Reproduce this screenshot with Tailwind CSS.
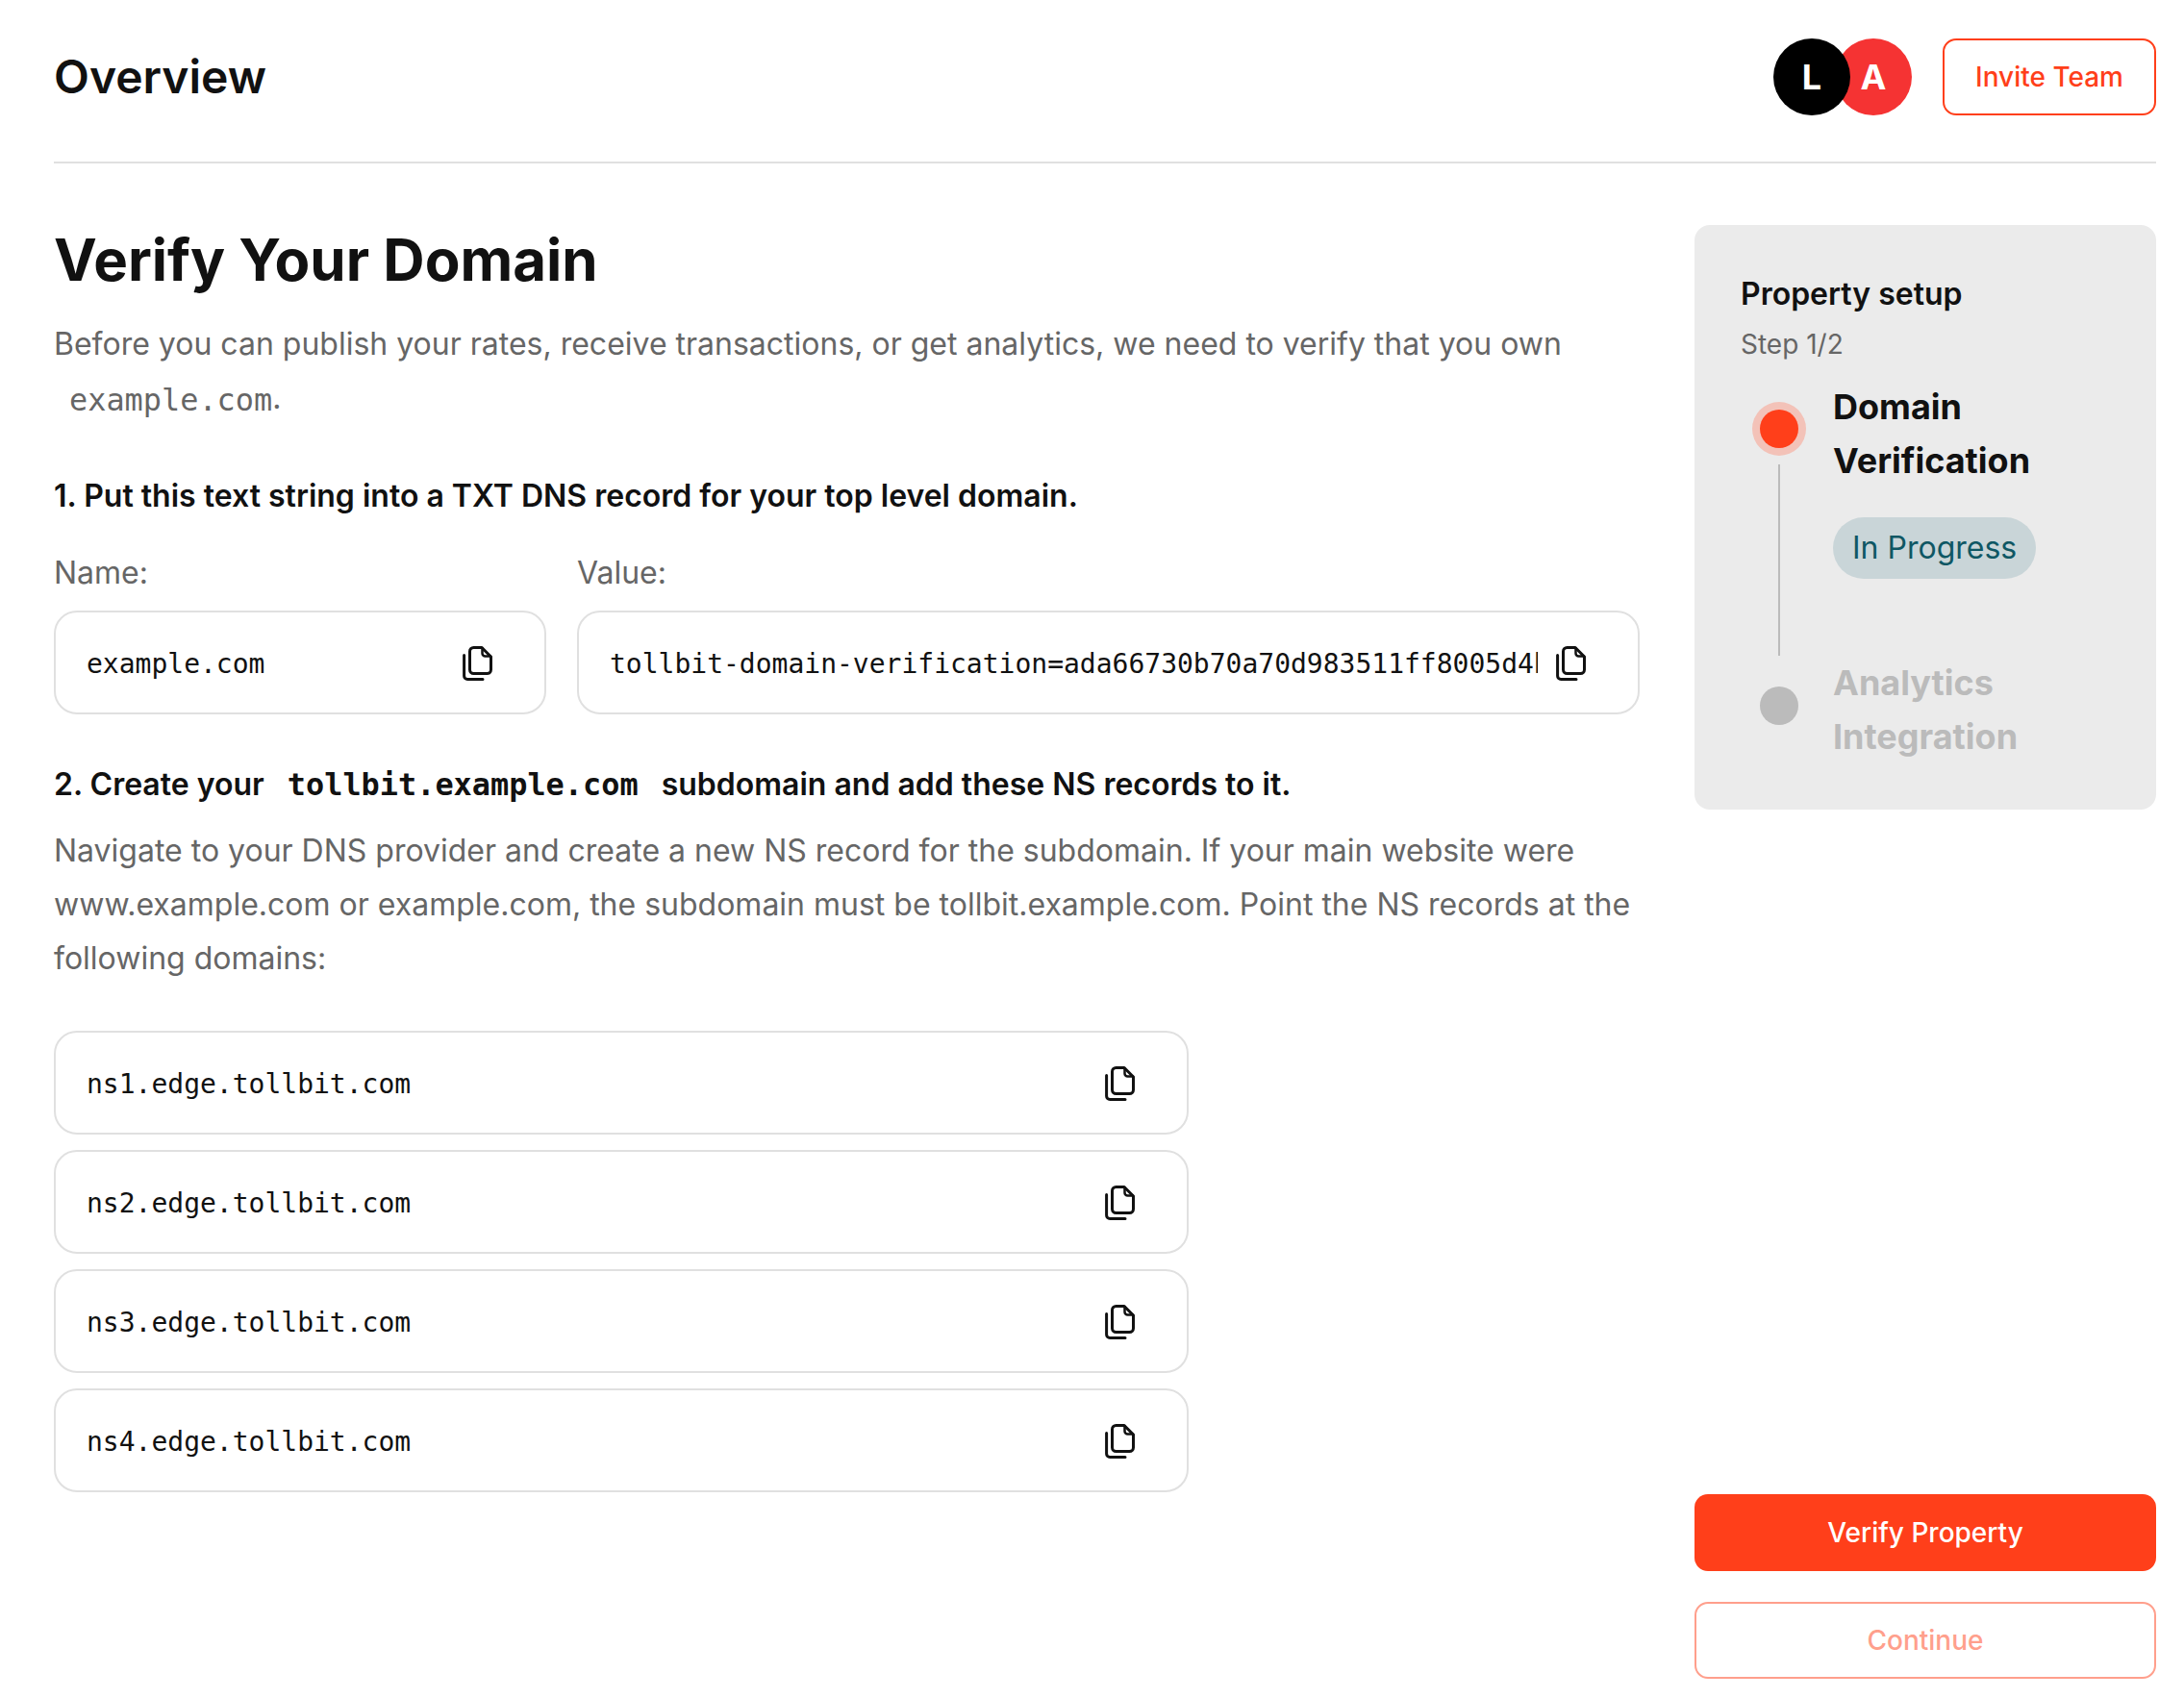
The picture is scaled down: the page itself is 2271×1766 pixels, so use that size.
<!DOCTYPE html>
<html lang="en">

<head>
  <meta charset="UTF-8" />
  <title>Overview</title>
  <script src="https://cdn.jsdelivr.net/npm/@tailwindcss/browser@4"></script>
</head>

<body class="bg-white font-['Inter',sans-serif] text-[#111111]">
  <div class="h-[1766px] pl-[56px] pr-[29px] pb-[20px] flex flex-col">

    <!-- header -->
    <header class="h-[170px] shrink-0 pt-[40px] border-b-2 border-[#e0e0e0] flex justify-between items-start">
      <h2 class="text-[48px] leading-[80px] font-semibold">Overview</h2>
      <div class="flex items-center gap-[32px]">
        <div class="flex">
          <div class="relative z-10 w-[80px] h-[80px] rounded-full bg-black text-white flex items-center justify-center text-[36px] font-bold">L</div>
          <div class="-ml-[16px] w-[80px] h-[80px] rounded-full bg-[#f53333] text-white flex items-center justify-center text-[36px] font-bold">A</div>
        </div>
        <button class="w-[222px] h-[80px] rounded-[14px] border-2 border-[#ff3f1a] text-[#ff3f1a] text-[28px] font-medium">Invite Team</button>
      </div>
    </header>

    <div class="flex-1 flex justify-between pt-[64px]">
      <!-- left column -->
      <main class="w-[1649px]">
        <h1 class="text-[60px] leading-[72px] font-bold">Verify Your Domain</h1>
        <p class="mt-[24px] text-[32px] leading-[56px] text-[#666666]">Before you can publish your rates, receive transactions, or get analytics, we need to verify that you own <code class="pl-4 leading-none align-[-2px] font-['DejaVu_Sans_Mono',monospace] text-[31.9px]">example.com</code>.</p>

        <h3 class="mt-[54px] text-[32px] leading-[40px] font-semibold">1. Put this text string into a TXT DNS record for your top level domain.</h3>

        <div class="mt-[40px] flex gap-[32px]">
          <div class="w-[512px]">
            <div class="text-[32px] leading-[40px] text-[#666666] mb-[19px]">Name:</div>
            <div class="h-[108px] rounded-[24px] border-2 border-[#e0e0e0] flex items-center pl-[32px] pr-[53px]">
              <div class="flex-1 overflow-hidden whitespace-nowrap font-['DejaVu_Sans_Mono',monospace] text-[28px] pt-[3px] mr-[19px]">example.com</div>
              <svg class="w-[32px] h-[37px] shrink-0" viewBox="0 0 32 37" fill="none" stroke="#111111" stroke-width="3" stroke-linecap="round" stroke-linejoin="round"><path d="M11.5 2.5H20L29.5 12V25.5a4 4 0 0 1-4 4H11.5a4 4 0 0 1-4-4V6.5a4 4 0 0 1 4-4Z"/><path d="M20.5 3V8.5a3 3 0 0 0 3 3H29" stroke-width="2.5"/><path d="M1.6 10.5V32a3.5 3.5 0 0 0 3.5 3.5H21"/></svg>
            </div>
          </div>
          <div class="flex-1 min-w-0">
            <div class="text-[32px] leading-[40px] text-[#666666] mb-[19px]">Value:</div>
            <div class="h-[108px] rounded-[24px] border-2 border-[#e0e0e0] flex items-center pl-[32px] pr-[53px]">
              <div class="flex-1 overflow-hidden whitespace-nowrap font-['DejaVu_Sans_Mono',monospace] text-[28px] pt-[3px] mr-[19px]">tollbit-domain-verification=ada66730b70a70d983511ff8005d4bc2</div>
              <svg class="w-[32px] h-[37px] shrink-0" viewBox="0 0 32 37" fill="none" stroke="#111111" stroke-width="3" stroke-linecap="round" stroke-linejoin="round"><path d="M11.5 2.5H20L29.5 12V25.5a4 4 0 0 1-4 4H11.5a4 4 0 0 1-4-4V6.5a4 4 0 0 1 4-4Z"/><path d="M20.5 3V8.5a3 3 0 0 0 3 3H29" stroke-width="2.5"/><path d="M1.6 10.5V32a3.5 3.5 0 0 0 3.5 3.5H21"/></svg>
            </div>
          </div>
        </div>

        <h3 class="mt-[45px] text-[32px] leading-[56px] font-semibold">2. Create your <code class="px-4 leading-none font-['DejaVu_Sans_Mono',monospace] font-bold text-[31.9px]">tollbit.example.com</code> subdomain and add these NS records to it.</h3>
        <p class="mt-[13px] text-[32px] leading-[56px] text-[#666666]">Navigate to your DNS provider and create a new NS record for the subdomain. If your main website were www.example.com or example.com, the subdomain must be tollbit.example.com. Point the NS records at the following domains:</p>

        <div class="mt-[47px] w-[1180px] flex flex-col gap-[16px]">
          <div class="h-[108px] rounded-[24px] border-2 border-[#e0e0e0] flex items-center justify-between pl-[32px] pr-[53px]">
            <span class="font-['DejaVu_Sans_Mono',monospace] text-[28px] pt-[3px]">ns1.edge.tollbit.com</span>
            <svg class="w-[32px] h-[37px] shrink-0" viewBox="0 0 32 37" fill="none" stroke="#111111" stroke-width="3" stroke-linecap="round" stroke-linejoin="round"><path d="M11.5 2.5H20L29.5 12V25.5a4 4 0 0 1-4 4H11.5a4 4 0 0 1-4-4V6.5a4 4 0 0 1 4-4Z"/><path d="M20.5 3V8.5a3 3 0 0 0 3 3H29" stroke-width="2.5"/><path d="M1.6 10.5V32a3.5 3.5 0 0 0 3.5 3.5H21"/></svg>
          </div>
          <div class="h-[108px] rounded-[24px] border-2 border-[#e0e0e0] flex items-center justify-between pl-[32px] pr-[53px]">
            <span class="font-['DejaVu_Sans_Mono',monospace] text-[28px] pt-[3px]">ns2.edge.tollbit.com</span>
            <svg class="w-[32px] h-[37px] shrink-0" viewBox="0 0 32 37" fill="none" stroke="#111111" stroke-width="3" stroke-linecap="round" stroke-linejoin="round"><path d="M11.5 2.5H20L29.5 12V25.5a4 4 0 0 1-4 4H11.5a4 4 0 0 1-4-4V6.5a4 4 0 0 1 4-4Z"/><path d="M20.5 3V8.5a3 3 0 0 0 3 3H29" stroke-width="2.5"/><path d="M1.6 10.5V32a3.5 3.5 0 0 0 3.5 3.5H21"/></svg>
          </div>
          <div class="h-[108px] rounded-[24px] border-2 border-[#e0e0e0] flex items-center justify-between pl-[32px] pr-[53px]">
            <span class="font-['DejaVu_Sans_Mono',monospace] text-[28px] pt-[3px]">ns3.edge.tollbit.com</span>
            <svg class="w-[32px] h-[37px] shrink-0" viewBox="0 0 32 37" fill="none" stroke="#111111" stroke-width="3" stroke-linecap="round" stroke-linejoin="round"><path d="M11.5 2.5H20L29.5 12V25.5a4 4 0 0 1-4 4H11.5a4 4 0 0 1-4-4V6.5a4 4 0 0 1 4-4Z"/><path d="M20.5 3V8.5a3 3 0 0 0 3 3H29" stroke-width="2.5"/><path d="M1.6 10.5V32a3.5 3.5 0 0 0 3.5 3.5H21"/></svg>
          </div>
          <div class="h-[108px] rounded-[24px] border-2 border-[#e0e0e0] flex items-center justify-between pl-[32px] pr-[53px]">
            <span class="font-['DejaVu_Sans_Mono',monospace] text-[28px] pt-[3px]">ns4.edge.tollbit.com</span>
            <svg class="w-[32px] h-[37px] shrink-0" viewBox="0 0 32 37" fill="none" stroke="#111111" stroke-width="3" stroke-linecap="round" stroke-linejoin="round"><path d="M11.5 2.5H20L29.5 12V25.5a4 4 0 0 1-4 4H11.5a4 4 0 0 1-4-4V6.5a4 4 0 0 1 4-4Z"/><path d="M20.5 3V8.5a3 3 0 0 0 3 3H29" stroke-width="2.5"/><path d="M1.6 10.5V32a3.5 3.5 0 0 0 3.5 3.5H21"/></svg>
          </div>
        </div>
      </main>

      <!-- sidebar -->
      <aside class="w-[480px] flex flex-col">
        <div class="h-[608px] rounded-[16px] bg-[#ebebeb] pt-[48px] pl-[48px]">
          <div class="text-[32px] leading-[48px] font-semibold">Property setup</div>
          <div class="mt-[8px] text-[28px] leading-[40px] text-[#666666]">Step 1/2</div>

          <div class="mt-[17px] flex">
            <div class="w-[80px] mr-[16px] flex flex-col items-center pt-[23px]">
              <div class="w-[56px] h-[56px] rounded-full bg-[#f3c2b8] flex items-center justify-center">
                <div class="w-[40px] h-[40px] rounded-full bg-[#ff3f1a]"></div>
              </div>
              <div class="mt-[9px] w-[2px] flex-1 bg-[#bbbbbb]"></div>
            </div>
            <div class="pb-[80px]">
              <div class="text-[36px] leading-[56px] font-bold">Domain<br />Verification</div>
              <span class="mt-[31px] inline-flex items-center h-[64px] px-[20px] rounded-full bg-[#c9d5d8] text-[#0f5764] text-[32px]">In Progress</span>
            </div>
          </div>

          <div class="flex">
            <div class="w-[80px] mr-[16px] flex flex-col items-center pt-[32px]">
              <div class="w-[40px] h-[40px] rounded-full bg-[#bbbbbb]"></div>
            </div>
            <div class="text-[36px] leading-[56px] font-bold text-[#bbbbbb]">Analytics<br />Integration</div>
          </div>
        </div>

        <button class="mt-auto h-[80px] rounded-[14px] bg-[#ff3f1a] text-white text-[28px] font-medium">Verify Property</button>
        <button class="mt-[32px] h-[80px] rounded-[14px] border-2 border-[#ff9f8c] text-[#ff9f8c] text-[28px] font-medium">Continue</button>
      </aside>
    </div>
  </div>
</body>

</html>
